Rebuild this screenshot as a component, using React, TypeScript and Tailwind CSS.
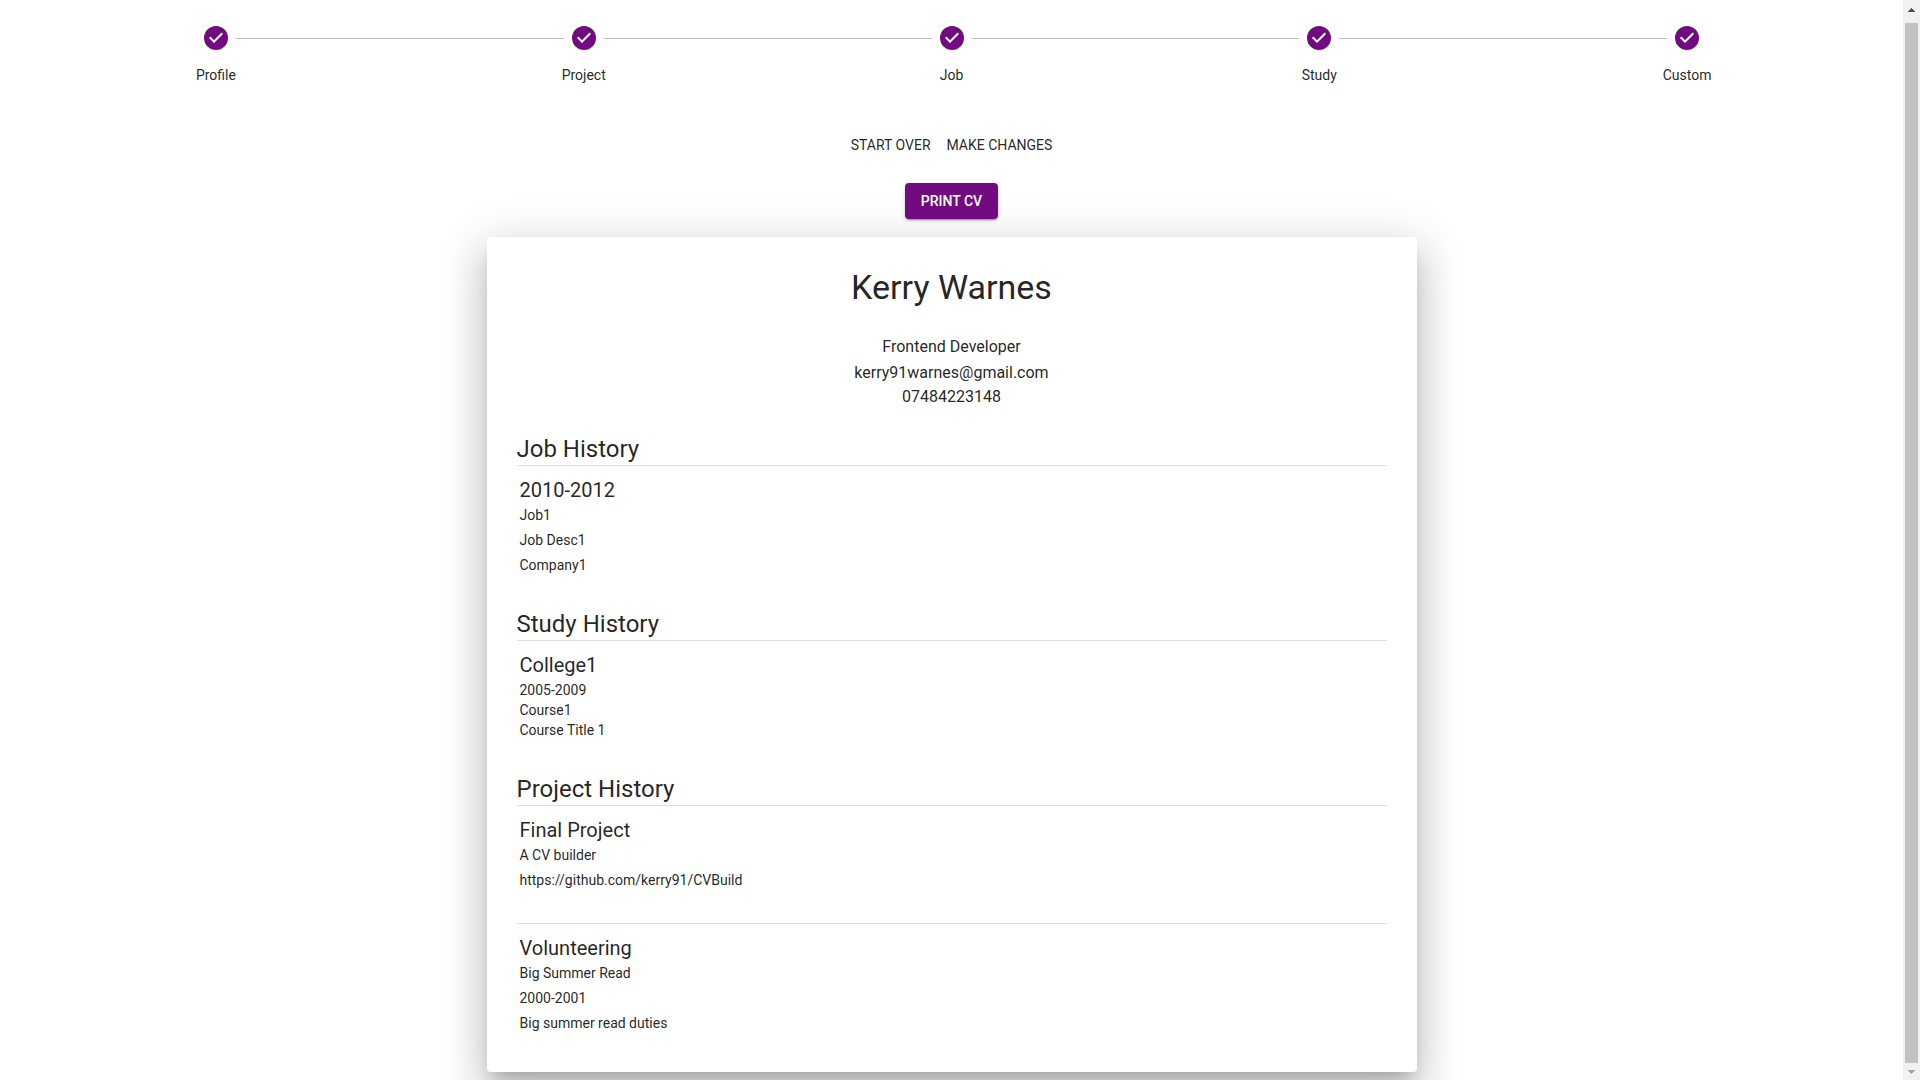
import React from "react";

const steps = ["Profile", "Project", "Job", "Study", "Custom"];

type Entry = {
  section?: string;
  title: string;
  lines: string[];
  compact?: boolean;
};

const entries: Entry[] = [
  { section: "Job History", title: "2010-2012", lines: ["Job1", "Job Desc1", "Company1"] },
  {
    section: "Study History",
    title: "College1",
    lines: ["2005-2009", "Course1", "Course Title 1"],
    compact: true,
  },
  {
    section: "Project History",
    title: "Final Project",
    lines: ["A CV builder", "https://github.com/kerry91/CVBuild"],
  },
  { title: "Volunteering", lines: ["Big Summer Read", "2000-2001", "Big summer read duties"] },
];

function StepIcon() {
  return (
    <svg viewBox="0 0 24 24" className="size-6 fill-[#720b80]" aria-hidden="true">
      <path d="M12 0a12 12 0 1 0 0 24 12 12 0 0 0 0-24zm-2 17l-5-5 1.4-1.4 3.6 3.6 7.6-7.6L19 8l-9 9z" />
    </svg>
  );
}

function Connector({ visible }: { visible: boolean }) {
  return <span className={visible ? "mt-3 h-px flex-1 bg-[#bdbdbd]" : "mt-3 h-px flex-1"} />;
}

function Stepper() {
  return (
    <ol className="flex px-8 pt-[26px]">
      {steps.map((step, i) => (
        <li key={step} className="flex flex-1 flex-col items-center gap-[15px]">
          <div className="flex w-full items-start gap-2">
            <Connector visible={i > 0} />
            <StepIcon />
            <Connector visible={i < steps.length - 1} />
          </div>
          <span className="text-sm leading-5">{step}</span>
        </li>
      ))}
    </ol>
  );
}

function EntryBlock({ section, title, lines, compact }: Entry) {
  return (
    <section className="pb-[33px]">
      {section && <h2 className="text-2xl leading-8">{section}</h2>}
      <hr className="border-t border-[#e0e0e0]" />
      <div className="px-[3px] pt-[9px]">
        <h3 className="text-xl leading-[30px]">{title}</h3>
        <div className={compact ? "flex flex-col" : "flex flex-col gap-[5px]"}>
          {lines.map((line) => (
            <p key={line} className="text-sm leading-5">
              {line}
            </p>
          ))}
        </div>
      </div>
    </section>
  );
}

function ScrollTrack() {
  return (
    <div className="flex w-[17px] shrink-0 flex-col items-center bg-[#f1f1f1]" aria-hidden="true">
      <div className="flex h-[23px] items-center pb-1">
        <svg viewBox="0 0 7 4" className="h-1 w-[7px] fill-[#505050]" shapeRendering="crispEdges">
          <path d="M3 0h1v1h1v1h1v1h1v1H0V3h1V2h1V1h1z" />
        </svg>
      </div>
      <div className="w-[13px] flex-1 bg-[#c1c1c1]" />
      <div className="flex h-[17px] items-center">
        <svg viewBox="0 0 7 4" className="h-1 w-[7px] fill-[#a3a3a3]" shapeRendering="crispEdges">
          <path d="M0 0h7v1H6v1H5v1H4v1H3V3H2V2H1V1H0z" />
        </svg>
      </div>
    </div>
  );
}

export default function App() {
  return (
    <div className="flex h-screen overflow-hidden bg-white font-[Roboto,sans-serif] text-black/87">
      <main className="min-w-0 flex-1 overflow-hidden">
        <Stepper />
        <div className="mt-[42px] flex justify-center">
          <button type="button" className="rounded px-2 py-1.5 text-sm leading-6 uppercase">
            Start over
          </button>
          <button type="button" className="rounded px-2 py-1.5 text-sm leading-6 uppercase">
            Make changes
          </button>
        </div>
        <div className="relative z-10 mt-5 flex justify-center">
          <button
            type="button"
            className="rounded bg-[#720b80] px-4 py-1.5 text-sm leading-6 font-medium text-white uppercase shadow-[0px_3px_1px_-2px_rgba(0,0,0,0.2),0px_2px_2px_0px_rgba(0,0,0,0.14),0px_1px_5px_0px_rgba(0,0,0,0.12)]"
          >
            Print CV
          </button>
        </div>
        <article className="mx-auto mt-[18px] w-full max-w-[930px] rounded bg-white px-[30px] pt-[29px] pb-1.5 shadow-[0px_11px_15px_-7px_rgba(0,0,0,0.2),0px_24px_38px_3px_rgba(0,0,0,0.14),0px_9px_46px_8px_rgba(0,0,0,0.12)]">
          <header className="flex flex-col items-center pb-6">
            <h1 className="text-[34px] leading-[42px]">Kerry Warnes</h1>
            <p className="mt-[27px] text-base leading-6">Frontend Developer</p>
            <p className="mt-0.5 text-base leading-6">kerry91warnes@gmail.com</p>
            <p className="text-base leading-6">07484223148</p>
          </header>
          {entries.map((entry) => (
            <EntryBlock key={entry.title} {...entry} />
          ))}
        </article>
      </main>
      <ScrollTrack />
    </div>
  );
}
